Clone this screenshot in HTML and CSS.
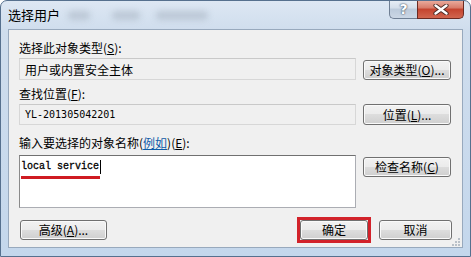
FILE: index.html
```html
<!DOCTYPE html>
<html lang="zh-CN">
<head>
<meta charset="utf-8">
<title>选择用户</title>
<link rel="stylesheet" href="styles.css">
</head>
<body>
<div class="window">
  <div class="titlebar">
    <span class="title">选择用户</span>
    <span class="ghost g1"></span>
    <span class="ghost g2"></span>
    <span class="ghost g3"></span>
    <div class="caption">
      <div class="cap help">?</div>
      <div class="cap close">
        <svg width="16" height="11" viewBox="0 0 16 11"><path d="M2.5 1.5 L13.5 9.5 M13.5 1.5 L2.5 9.5" stroke="#4a2a24" stroke-width="4.2" stroke-linecap="round"/><path d="M2.5 1.5 L13.5 9.5 M13.5 1.5 L2.5 9.5" stroke="#ffffff" stroke-width="2.4" stroke-linecap="round"/></svg>
      </div>
    </div>
  </div>
  <div class="client">
    <div class="label l1">选择此对象类型(<u>S</u>):</div>
    <div class="row r1">
      <div class="field">用户或内置安全主体</div>
      <button class="btn side">对象类型(<u>O</u>)...</button>
    </div>
    <div class="label l2">查找位置(<u>F</u>):</div>
    <div class="row r2">
      <div class="field mono">YL-201305042201</div>
      <button class="btn side">位置(<u>L</u>)...</button>
    </div>
    <div class="label l3">输入要选择的对象名称(<a class="link">例如</a>)(<u>E</u>):</div>
    <div class="row r3">
      <div class="textarea"><span class="typed">local service</span><span class="caret"></span><div class="mark"></div></div>
      <button class="btn side check">检查名称(<u>C</u>)</button>
    </div>
    <div class="bottom">
      <button class="btn adv">高级(<u>A</u>)...</button>
      <div class="spacer"></div>
      <div class="highlight"><button class="btn ok">确定</button></div>
      <button class="btn cancel">取消</button>
    </div>
    <svg class="grip" width="9" height="9" viewBox="0 0 9 9">
      <g fill="#b9c0c8">
        <rect x="7" y="1" width="2" height="2"/>
        <rect x="4" y="4" width="2" height="2"/><rect x="7" y="4" width="2" height="2"/>
        <rect x="1" y="7" width="2" height="2"/><rect x="4" y="7" width="2" height="2"/><rect x="7" y="7" width="2" height="2"/>
      </g>
    </svg>
  </div>
</div>
</body>
</html>
```
FILE: styles.css
```css
* { box-sizing: border-box; }
html, body { margin: 0; padding: 0; }
body {
  width: 471px;
  height: 257px;
  overflow: hidden;
  background: #ffffff;
  font-family: "Noto Sans CJK SC", "Liberation Sans", sans-serif;
  font-size: 12px;
  color: #000;
}
.window {
  width: 471px;
  height: 257px;
  border: 1px solid #56708e;
  border-radius: 7px 7px 0 0;
  background: linear-gradient(to bottom, #dde7f3 0px, #cfdded 30px, #c4d7ec 100%);
  display: flex;
  flex-direction: column;
  overflow: hidden;
}
.titlebar {
  height: 28px;
  display: flex;
  align-items: flex-start;
}
.title {
  margin-left: 7px;
  margin-top: 5px;
  font-size: 13px;
  line-height: 17px;
  color: #000;
}
.ghost {
  height: 9px;
  margin-top: 10px;
  background: #b3bfcd;
  filter: blur(3px);
  opacity: 0.75;
  border-radius: 4px;
}
.g1 { width: 22px; margin-left: 8px; }
.g2 { width: 28px; margin-left: 22px; }
.g3 { width: 52px; margin-left: 16px; }
.caption {
  margin-left: auto;
  margin-right: 6px;
  margin-top: -1px;
  display: flex;
}
.cap {
  height: 19px;
  display: flex;
  align-items: center;
  justify-content: center;
}
.help {
  width: 28px;
  border: 1px solid #6f7f94;
  border-right: none;
  border-top: none;
  border-radius: 0 0 0 5px;
  background: linear-gradient(to bottom, #e9eff6 0%, #d4deea 45%, #bccadb 50%, #cbd7e5 100%);
  color: #fff;
  font-family: "DejaVu Sans", sans-serif;
  font-weight: bold;
  font-size: 14px;
  text-shadow: 0 0 2px #3a4a5e, 0 0 1px #3a4a5e;
}
.close {
  width: 47px;
  border: 1px solid #6b2a22;
  border-top: none;
  border-radius: 0 0 5px 0;
  background: linear-gradient(to bottom, #ecb0a2 0%, #d77a68 45%, #c4432e 50%, #d1664f 100%);
}
.client {
  flex: 1;
  margin: 0 7px 8px 7px;
  border: 1px solid #98a9bd;
  background: #f0f0f0;
  padding: 11px 10px 0 10px;
  display: flex;
  flex-direction: column;
  position: relative;
}
.label {
  line-height: 14px;
  height: 14px;
  white-space: nowrap;
}
.l2 { margin-top: 7px; }
.l3 { margin-top: 11px; }
.link { color: #0f5ba8; text-decoration: underline; }
.row {
  display: flex;
  gap: 7px;
}
.r1 { margin-top: 3px; height: 22px; }
.r2 { margin-top: 3px; height: 21px; }
.r3 { margin-top: 5px; height: 53px; }
.field {
  width: 337px;
  border: 1px solid #d7d7d7;
  border-top-color: #c9c9c9;
  background: #f0f0f0;
  padding: 0 5px;
  display: flex;
  align-items: center;
  color: #000;
  white-space: nowrap;
}
.mono {
  font-family: "DejaVu Sans Mono", "Liberation Mono", monospace;
  font-size: 10px;
}
.btn {
  font-family: "Noto Sans CJK SC", "Liberation Sans", sans-serif;
  font-size: 12px;
  color: #000;
  height: 20px;
  padding: 0;
  border: 1px solid #707070;
  border-radius: 3px;
  background: linear-gradient(to bottom, #f2f2f2 0%, #ebebeb 50%, #dddddd 50%, #cfcfcf 100%);
  box-shadow: inset 0 0 0 1px #fafafa;
  line-height: 16px;
  white-space: nowrap;
}
.side { width: 88px; align-self: flex-end; }
.r2 .side { height: 21px; }
.check { align-self: flex-start; margin-top: 2px; height: 20px; }
.textarea {
  width: 337px;
  background: #fff;
  border: 1px solid #abadb3;
  border-top-color: #707070;
  border-left-color: #8a8a8a;
  padding: 4px 1px;
  position: relative;
  font-family: "Liberation Mono", "DejaVu Sans Mono", monospace;
  font-size: 10px;
  line-height: 13px;
  display: flex;
  align-items: flex-start;
}
.typed { color: #000; -webkit-text-stroke: 0.3px #000; }
.caret {
  width: 1px;
  height: 14px;
  background: #000;
  margin-left: 1px;
}
.mark {
  position: absolute;
  left: 1px;
  top: 20px;
  width: 79px;
  height: 3px;
  background: #cf1b22;
}
.bottom {
  margin-top: 11px;
  display: flex;
  align-items: center;
  height: 22px;
}
.adv { width: 87px; margin-left: 1px; }
.spacer { flex: 1; }
.highlight {
  border: 3px solid #d2222a;
  display: flex;
}
.ok { width: 68px; height: 20px; }
.cancel { width: 73px; margin-left: 8px; }
.grip {
  position: absolute;
  right: 2px;
  bottom: 1px;
}
```
